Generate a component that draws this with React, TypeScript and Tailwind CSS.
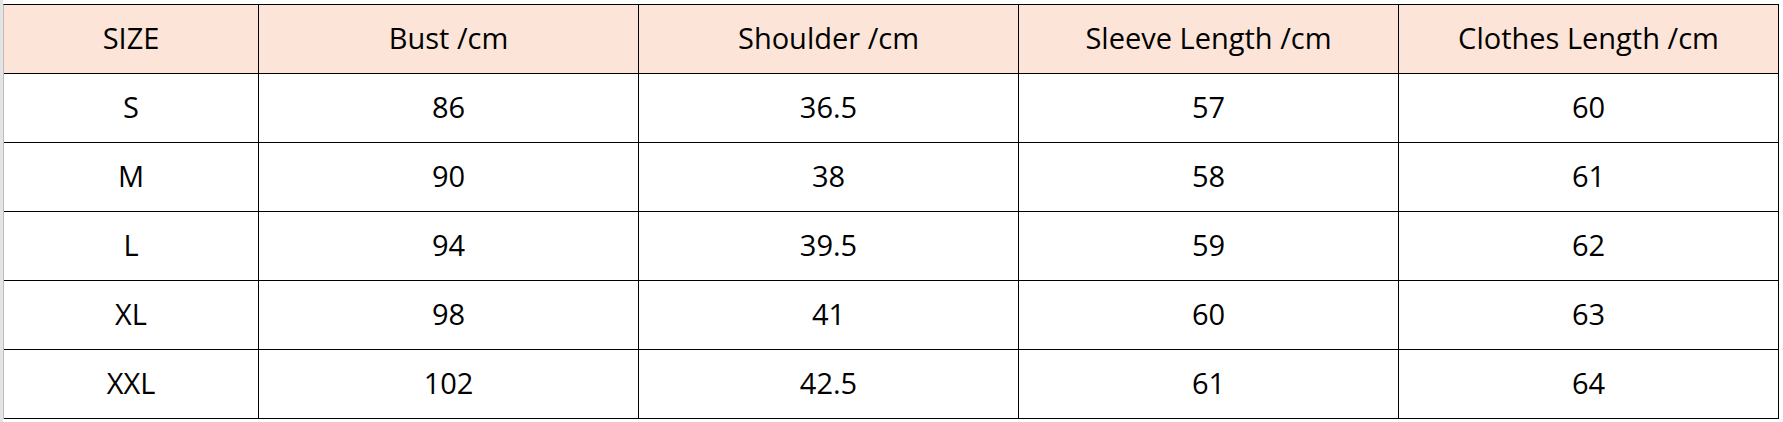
const headers = ["SIZE", "Bust /cm", "Shoulder /cm", "Sleeve Length /cm", "Clothes Length /cm"];

const rows = [
  ["S", "86", "36.5", "57", "60"],
  ["M", "90", "38", "58", "61"],
  ["L", "94", "39.5", "59", "62"],
  ["XL", "98", "41", "60", "63"],
  ["XXL", "102", "42.5", "61", "64"],
];

const App = () => {
  return (
    <div className="flex h-[422px] w-[1783px] bg-white text-black font-['Open_Sans','Noto_Sans',sans-serif]">
      <div className="w-[3px] h-full bg-[#e4e4e4]" />
      <div className="mt-[4px] self-start border-l border-t border-l-[#bdbdbd] border-t-black">
        <div className="grid grid-cols-[255px_380px_380px_380px_380px]">
          {headers.map((h) => (
            <div
              key={h}
              className="h-[69px] pb-[2px] flex items-center justify-center bg-[#fce5d8] border-r border-b border-black text-[29px]"
            >
              {h}
            </div>
          ))}
          {rows.map((row) =>
            row.map((cell, i) => (
              <div
                key={row[0] + i}
                className="h-[69px] pb-[2px] flex items-center justify-center border-r border-b border-black text-[29px]"
              >
                {cell}
              </div>
            ))
          )}
        </div>
      </div>
    </div>
  );
};

export default App;
